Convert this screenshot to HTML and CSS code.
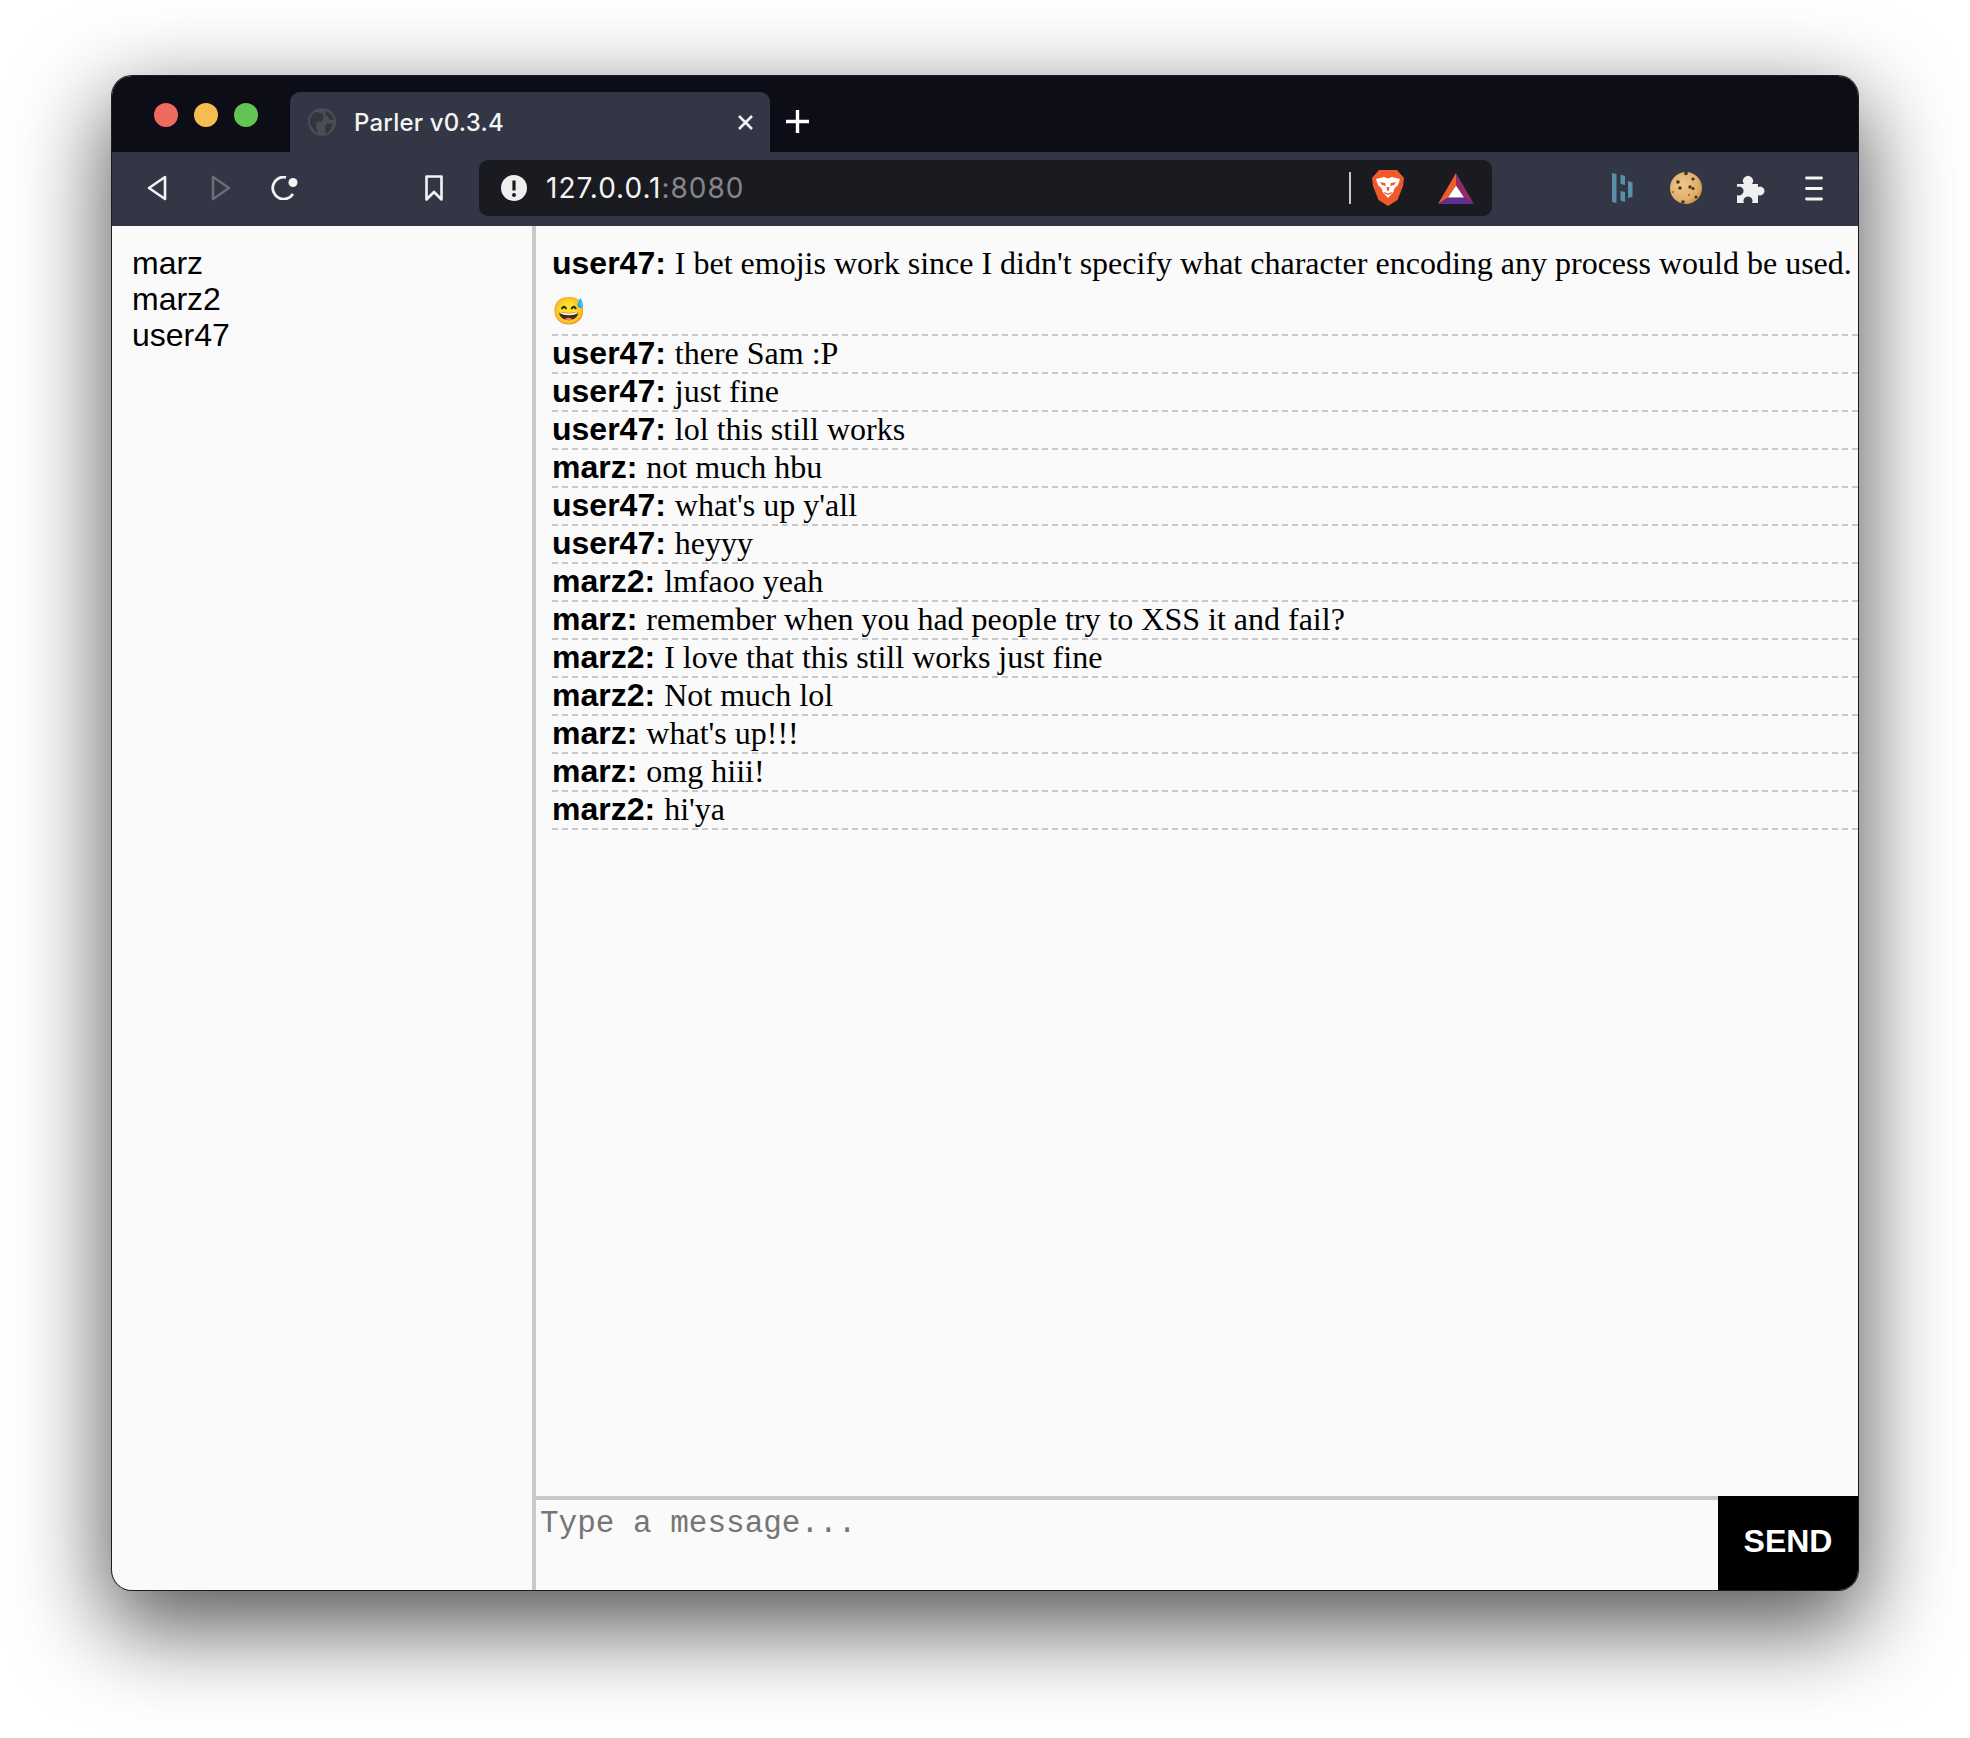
FILE: index.html
```html
<!DOCTYPE html>
<html lang="en">
<head>
  <meta charset="UTF-8">
  <title>Parler v0.3.4</title>
  <link rel="stylesheet" href="styles.css">
</head>
<body>
  <div class="window">
    <div class="tabbar">
      <div class="lights"><span class="light red"></span><span class="light yellow"></span><span class="light green"></span></div>
      <div class="tab">
        <svg class="globe" width="28" height="28" viewBox="0 0 28 28"><circle cx="14" cy="14" r="14" fill="#4b4d55"/><path d="M7 4l7 1 2 4-2 4-5 1-1 5 2 6-3-1-5-8 0-6zM18 3l6 4 2 5-4 0-2-3-3-2zM19 15l6 1-3 7-4 3-1-6z" fill="#33363f"/></svg>
        <span class="tab-title">Parler v0.3.4</span>
        <svg class="tab-close" width="17" height="15" viewBox="0 0 17 15"><path d="M2 1l13 13M15 1L2 14" stroke="#f4f4f4" stroke-width="2.600"/></svg>
      </div>
      <svg class="new-tab" width="25" height="25" viewBox="0 0 25 25"><path d="M12.500 1v23M1 12.500h23" stroke="#fff" stroke-width="3.400"/></svg>
    </div>
    <div class="toolbar">
      <svg class="btn-back" width="20" height="26" viewBox="0 0 20 26"><path d="M18 2L2 13l16 11z" fill="none" stroke="#f2f2f2" stroke-width="2.600" stroke-linejoin="round"/></svg>
      <svg class="btn-forward" width="20" height="26" viewBox="0 0 20 26"><path d="M2 2l16 11L2 24z" fill="none" stroke="#6a6c76" stroke-width="2.600" stroke-linejoin="round"/></svg>
      <svg class="btn-reload" width="27" height="24" viewBox="0 0 27 24"><path d="M22 18A11 11 0 1 1 15 1.300" fill="none" stroke="#f4f4f4" stroke-width="2.800"/><circle cx="22" cy="6.500" r="4.500" fill="#f4f4f4"/></svg>
      <svg class="btn-bookmark" width="20" height="26" viewBox="0 0 20 26"><path d="M2.500 1.500h15v23L10 17l-7.500 7.500z" fill="none" stroke="#f4f4f4" stroke-width="2.600" stroke-linejoin="round"/></svg>
      <div class="urlbar">
        <svg class="info" width="26" height="26" viewBox="0 0 26 26"><circle cx="13" cy="13" r="13" fill="#efefef"/><path d="M13 5.500v10" stroke="#1a1b20" stroke-width="3.200"/><circle cx="13" cy="20" r="2" fill="#1a1b20"/></svg>
        <span class="url">127.0.0.1<span class="port">:8080</span></span>
        <span class="url-sep"></span>
        <svg class="brave" width="32" height="36" viewBox="0 0 32 36"><path d="M7 0h18l7 8-1 8-5.500 14L16 36 6.500 30 1 16 0 8z" fill="#f1592a"/><path d="M4 9l8-2 4 1.500L20 7l8 2-2 6-4 4-.500 3L16 28l-5.500-6-.500-3-4-4z" fill="#fff"/><path d="M8 12l5 1 1 3-4-1zM24 12l-5 1-1 3 4-1zM14.500 17h3l-.800 4h-1.400zM11.500 22l3.500 1 1 1 1-1 3.500-1-1 1.500-3.500 1.500-3.500-1.500z" fill="#f1592a"/></svg>
        <svg class="bat" width="36" height="31" viewBox="0 0 36 31"><path d="M18 0L0 31l10-6.500 8-12z" fill="#f15a2b"/><path d="M18 0l18 31-10-6.500-8-12z" fill="#8f2a6b"/><path d="M0 31h36l-10-6.500H10z" fill="#662d91"/><path d="M18 12.500l8 12H10z" fill="#fff"/></svg>
      </div>
      <svg class="ext-bars" width="21" height="30" viewBox="0 0 21 30"><path d="M0 0l4.500 1v29L0 29zM8.500 1.500L13 3v9l-4.500-1zM8.500 18l4.500 1v10l-4.500-1.500zM16 8l4.500 1.500V24L16 25z" fill="#5a90a9"/></svg>
      <svg class="ext-cookie" width="32" height="32" viewBox="0 0 32 32">
        <defs><radialGradient id="crumb" cx="0.400" cy="0.400" r="0.700"><stop offset="0" stop-color="#eec88f"/><stop offset="0.700" stop-color="#dfae6b"/><stop offset="1" stop-color="#bf873f"/></radialGradient></defs>
        <circle cx="16" cy="16" r="16" fill="url(#crumb)"/>
        <g fill="#4c2d1a"><circle cx="8" cy="10" r="1.800"/><circle cx="16" cy="1.500" r="1.800"/><circle cx="23" cy="7" r="1.600"/><circle cx="10" cy="16" r="1.700"/><circle cx="20" cy="15" r="1.700"/><circle cx="23" cy="16.500" r="1.500"/><circle cx="26" cy="25" r="1.500"/><circle cx="13" cy="30" r="1.800"/><circle cx="19" cy="23" r="0.800"/><circle cx="3" cy="20" r="0.800"/></g>
      </svg>
      <svg class="ext-puzzle" width="29" height="29" viewBox="0 0 29 29"><path d="M1 10h7a5 5 0 1 1 8 0h6v3a4.500 4.500 0 1 1 0 8v8h-6a4.500 4.500 0 1 0-8 0H1v-8a4.500 4.500 0 1 0 0-8z" fill="#efefef"/></svg>
      <svg class="menu" width="18" height="25" viewBox="0 0 18 25"><path d="M1.500 2h15M1.500 12.500h15M1.500 23h15" stroke="#f4f4f4" stroke-width="2.800" stroke-linecap="round"/></svg>
    </div>
    <div class="app">
      <ul class="users">
        <li>marz</li>
        <li>marz2</li>
        <li>user47</li>
      </ul>
      <div class="chat">
        <ul class="messages">
          <li><b>user47:</b> I bet emojis work since I didn't specify what character encoding any process would be used. <span class="emoji">😅</span></li>
          <li><b>user47:</b> there Sam :P</li>
          <li><b>user47:</b> just fine</li>
          <li><b>user47:</b> lol this still works</li>
          <li><b>marz:</b> not much hbu</li>
          <li><b>user47:</b> what's up y'all</li>
          <li><b>user47:</b> heyyy</li>
          <li><b>marz2:</b> lmfaoo yeah</li>
          <li><b>marz:</b> remember when you had people try to XSS it and fail?</li>
          <li><b>marz2:</b> I love that this still works just fine</li>
          <li><b>marz2:</b> Not much lol</li>
          <li><b>marz:</b> what's up!!!</li>
          <li><b>marz:</b> omg hiii!</li>
          <li><b>marz2:</b> hi'ya</li>
        </ul>
        <form class="composer">
          <textarea class="input" placeholder="Type a message..."></textarea>
          <button class="send" type="button">SEND</button>
        </form>
      </div>
    </div>
  </div>
</body>
</html>
```

FILE: styles.css
```css
html, body {
  margin: 0;
  padding: 0;
  height: 100%;
}

body {
  background-color: #fff;
  padding: 76px 0 0 112px;
  box-sizing: border-box;
  overflow: hidden;
}

.window {
  width: 1746px;
  height: 1514px;
  border-radius: 20px;
  overflow: hidden;
  display: flex;
  flex-direction: column;
  background-color: #fafafa;
  box-shadow: 0 0 0 1px #1c1c1e, 0 32px 90px 6px rgba(0, 0, 0, 0.66);
}

.tabbar {
  height: 76px;
  flex: none;
  background-color: #0c0d16;
  display: flex;
  align-items: flex-end;
}

.lights {
  display: flex;
  gap: 16px;
  width: 178px;
  height: 76px;
  padding: 0 0 25px 42px;
  box-sizing: border-box;
  align-items: flex-end;
}

.light {
  width: 24px;
  height: 24px;
  border-radius: 50%;
}

.red { background-color: #ee6a5f; }
.yellow { background-color: #f5bd4f; }
.green { background-color: #61c454; }

.tab {
  width: 480px;
  height: 60px;
  background-color: #333644;
  border-radius: 10px 10px 0 0;
  display: flex;
  align-items: center;
  box-sizing: border-box;
  padding: 0 16px 0 18px;
}

.globe { margin-right: 18px; }

.tab-title {
  flex: 1;
  color: #f4f4f4;
  font: 500 24px Inter, "Liberation Sans", sans-serif;
  letter-spacing: 0.2px;
}

.new-tab {
  margin: 0 0 18px 15px;
}

.toolbar {
  height: 74px;
  flex: none;
  background-color: #333644;
  display: flex;
  align-items: center;
  padding-bottom: 2px;
  box-sizing: border-box;
}

.btn-back { margin-left: 35px; }
.btn-forward { margin-left: 44px; }
.btn-reload { margin-left: 40px; }
.btn-bookmark { margin-left: 126px; }

.urlbar {
  width: 1013px;
  height: 56px;
  margin-left: 35px;
  background-color: #1a1b20;
  border-radius: 9px;
  display: flex;
  align-items: center;
  box-sizing: border-box;
  padding: 0 18px 0 22px;
}

.url {
  flex: 1;
  margin-left: 19px;
  color: #f4f4f4;
  font: 28px Inter, "Liberation Sans", sans-serif;
  letter-spacing: 1px;
}

.port { color: #85868b; }

.url-sep {
  width: 2px;
  height: 32px;
  background-color: #c8c8c8;
}

.brave { margin-left: 21px; }
.bat { margin-left: 34px; }

.ext-bars { margin-left: 120px; }
.ext-cookie { margin-left: 37px; }
.ext-puzzle { margin-left: 34px; }
.menu { margin-left: 40px; }

.app {
  flex: 1;
  min-height: 0;
  display: flex;
}

.users {
  width: 424px;
  flex: none;
  margin: 0;
  padding: 19px 0 0 20px;
  box-sizing: border-box;
  list-style: none;
  font: 32px/36px "Liberation Sans", Arial, sans-serif;
  color: #000;
  border-right: 4px solid #c8c8c8;
}

.chat {
  flex: 1;
  min-width: 0;
  display: flex;
  flex-direction: column;
}

.messages {
  flex: 1;
  margin: 0;
  padding: 19px 0 0 16px;
  list-style: none;
  font: 32px/36px "Liberation Serif", "Times New Roman", serif;
  color: #000;
}

.messages li {
  margin-top: -1px;
  padding-bottom: 1px;
  border-bottom: 2px dashed #c8c8c8;
}

.messages li:first-child {
  margin-top: 0;
  padding-bottom: 0;
}

.messages b {
  font-family: "Liberation Sans", Arial, sans-serif;
  margin-right: 1px;
}

.emoji {
  display: block;
  height: 51px;
  padding-top: 2px;
  font-size: 27px;
  line-height: 56px;
}

.composer {
  height: 94px;
  flex: none;
  display: flex;
}

.input {
  flex: 1;
  border: 0;
  border-top: 4px solid #c8c8c8;
  background-color: #fafafa;
  resize: none;
  outline: none;
  padding: 6px 4px;
  font: 31px "Liberation Mono", "Courier New", monospace;
}

.input::placeholder {
  color: #757575;
}

.send {
  width: 140px;
  border: 0;
  padding: 0 0 3px;
  background-color: #000;
  color: #fff;
  font: bold 32px "Liberation Sans", Arial, sans-serif;
}
```
